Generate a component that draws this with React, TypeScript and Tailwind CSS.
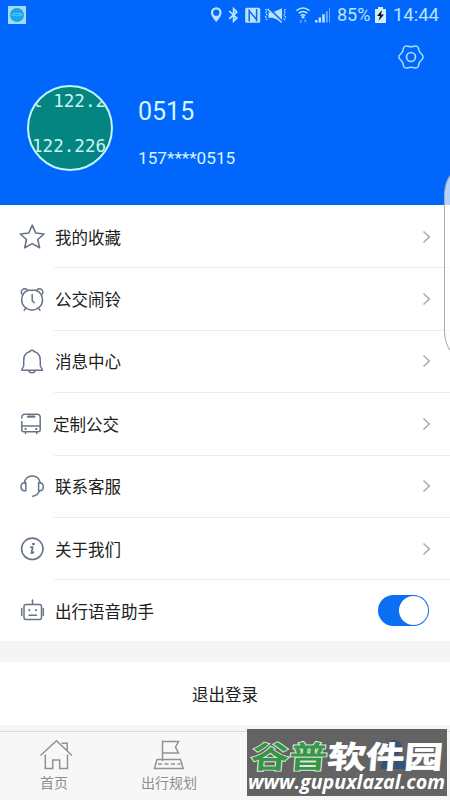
import type { ReactNode } from "react";

type MenuItem = {
  label: string;
  icon: ReactNode;
  shifted?: boolean;
};

function Icon({ children }: { children: ReactNode }) {
  return (
    <svg
      viewBox="0 0 26 26"
      className="h-[26px] w-[26px] shrink-0"
      fill="none"
      stroke="#66748a"
      strokeWidth="1.5"
      strokeLinecap="round"
      strokeLinejoin="round"
    >
      {children}
    </svg>
  );
}

const menuItems: MenuItem[] = [
  {
    label: "我的收藏",
    icon: (
      <Icon>
        <path d="M13.2 1.2 16.7 9 25 10 18.8 15.5 20.6 23.8 13.2 19.6 5.7 23.8 7.5 15.5 1.3 10 9.8 9Z" strokeWidth="1.6" />
      </Icon>
    ),
  },
  {
    label: "公交闹铃",
    icon: (
      <Icon>
        <path d="M9.5 3.3H16.5C21 4.8 23.5 8.6 23.5 13A10.4 10 0 0 1 2.7 13C2.7 8.6 5 4.8 9.5 3.3Z" />
        <path d="M3.5 7.7A3.4 3.4 0 1 1 8.7 3.5M17.5 3.5A3.4 3.4 0 1 1 22.7 7.7M6.4 21.6 5.2 23.4M19.8 21.6 21 23.4" />
        <path d="M13.2 7.5V13.5L15.2 15.8" strokeWidth="1.5" />
      </Icon>
    ),
  },
  {
    label: "消息中心",
    icon: (
      <Icon>
        <path d="M11 2.6C11 .8 15 .8 15 2.6C19.5 3.6 21.3 7.2 21.3 11.5V16.5C21.3 18.5 23.4 19.3 23.4 21.3H2.8C2.8 19.3 4.7 18.5 4.7 16.5V11.5C4.7 7.2 6.5 3.6 11 2.6Z" />
        <path d="M9.8 21.5C10 24.6 16 24.6 16.2 21.5" />
      </Icon>
    ),
  },
  {
    label: "定制公交",
    shifted: true,
    icon: (
      <Icon>
        <path d="M2.8 7V6.2A3 3 0 0 1 5.8 3.2H18.2A3 3 0 0 1 21.2 6.2V18.7A2 2 0 0 1 19.2 20.7H4.8A2 2 0 0 1 2.8 18.7V10.5M3 15H21M6.5 20.8V22.4M17.7 20.8V22.4" />
        <path d="M9 5.7H15.3" strokeWidth="2.2" />
        <path d="M6.3 18H6.8M17 18H17.5" strokeWidth="1.8" />
      </Icon>
    ),
  },
  {
    label: "联系客服",
    icon: (
      <Icon>
        <path d="M5.5 9C6 4.4 9 2 13.3 2S20.4 4.4 21 9" />
        <path d="M6.8 8.8V16.8H5.4C1 16.8 1 8.8 5.4 8.8ZM19.6 8.8V16.8H21C25.3 16.8 25.3 8.8 21 8.8Z" />
        <path d="M20.4 17C19.4 20 17 21.8 13.6 22.2" />
      </Icon>
    ),
  },
  {
    label: "关于我们",
    icon: (
      <Icon>
        <circle cx="13.3" cy="12.8" r="10.7" strokeWidth="1.6" />
        <path d="M11.8 11.2H13.7L12.4 17.2C13 17.4 13.8 17.1 14.6 16.2" strokeWidth="1.7" />
        <circle cx="14.4" cy="8" r="1" fill="#66748a" strokeWidth=".8" />
      </Icon>
    ),
  },
];

function StatusBar() {
  return (
    <div className="flex h-[30px] items-center justify-between pl-2 pr-[11px] text-[#b9e4ff]">
      <svg viewBox="0 0 18 18" className="h-[18px] w-[18px]">
        <rect width="18" height="18" fill="#a5d9fa" />
        <circle cx="9" cy="9" r="7" fill="#16a6ed" />
        <path d="M3 8.5Q9 11.5 15 8.5M5 7.5H13" fill="none" stroke="#62c9f7" strokeWidth="1" />
      </svg>
      <div className="flex items-center">
        <svg viewBox="0 0 126 20" className="mr-[3px] h-5 w-[126px]" fill="currentColor">
          <path fillRule="evenodd" d="M8.3 2.2A5.4 5.4 0 0 0 2.9 7.6C2.9 11.7 8.3 17 8.3 17S13.6 11.7 13.6 7.6A5.4 5.4 0 0 0 8.3 2.2ZM8.3 4.6A3.1 3.1 0 1 1 8.3 10.8A3.1 3.1 0 0 1 8.3 4.6Z" />
          <path d="M21.2 6 28.8 13.1 25.6 16.3V3.7L28.8 6.9 21.2 13.8" fill="none" stroke="currentColor" strokeWidth="1.7" />
          <rect x="37.2" y="2.7" width="15" height="15" rx="1.5" />
          <path d="M41.2 16.5V5.8L48.6 14.6V4M41.2 8.5V4.6M48.6 14V16.5" fill="none" stroke="#0868f7" strokeWidth="1.5" />
          <path d="M60.5 7.4H64.5L74 3.3V16.5L64.5 12.7H60.5Z" />
          <path d="M60.3 3.2 74.4 16.9" stroke="#0868f7" strokeWidth="2.4" />
          <path d="M59.5 4 73.6 17.5" stroke="currentColor" strokeWidth="1.5" />
          <path d="M57.5 4 59 6 57.5 8 59 10 57.5 12 59 14 57.5 16M77.5 4 76 6 77.5 8 76 10 77.5 12 76 14 77.5 16" fill="none" stroke="currentColor" strokeWidth="1.1" strokeDasharray="2 1" />
          <g fill="none" stroke="currentColor" strokeWidth="1.5">
            <path d="M88.5 5.6Q95 .3 101.5 5.6M90.7 8.2Q95 4.7 99.3 8.2M92.7 10.6Q95 8.8 97.3 10.6" />
          </g>
          <path d="M95 10.6 97 12.2 95 13.8 93 12.2Z" />
          <path d="M92.7 15V18M97.3 14.5V17.5" stroke="#66adff" strokeWidth="1.5" />
          <path d="M107 15H109.5V17.5H107ZM110.6 12.5H113V17.5H110.6ZM114.2 9.2H116.7V17.5H114.2Z" />
          <path d="M117.8 6.2H119.8V17.5H117.8ZM121 3H122V17.5H121Z" opacity=".55" />
        </svg>
        <span className="w-[35px] text-[18px] leading-5">85%</span>
        <svg viewBox="0 0 11 16" className="ml-[3px] mr-[7px] h-4 w-[11px]">
          <path d="M3 0H8V2H11V16H0V2H3Z" fill="#d3effa" />
          <path d="M7 3 2 9H5L3.5 14 9 7.5H6Z" fill="#07172d" />
        </svg>
        <span className="text-[18.5px] leading-5">14:44</span>
      </div>
    </div>
  );
}

function Header() {
  return (
    <header className="h-[205px] bg-[#0167fc] font-[Roboto,sans-serif] text-[#d8f4ff]">
      <StatusBar />
      <div className="flex h-[54px] justify-end pr-[26px] pt-[14px]">
        <svg viewBox="0 0 26 26" className="h-[26px] w-[26px]" fill="none" stroke="#a9dcff" strokeWidth="1.5" strokeLinejoin="round">
          <path d="M6.8 2.3C8.9 1.2 10.1 2.8 13 2.8S17.1 1.2 19.2 2.3C21 3.3 20.2 5.4 21.6 7.8S25.1 10.6 25.1 13S23 15.8 21.6 18.2S21 22.7 19.2 23.7C17.1 24.8 15.9 23.2 13 23.2S8.9 24.8 6.8 23.7C5 22.7 5.8 20.6 4.4 18.2S.9 15.4 .9 13S3 10.2 4.4 7.8S5 3.3 6.8 2.3Z" />
          <circle cx="13" cy="13" r="4.5" strokeWidth="1.7" />
        </svg>
      </div>
      <div className="flex">
        <div className="ml-[27px] mt-[1px] h-[86px] w-[86px] shrink-0 overflow-hidden rounded-full border-2 border-[#c3f5ff] bg-[#058581] font-['DejaVu_Sans_Mono',monospace] text-[17.6px] leading-5 text-[#ccf5ef]">
          <p className="ml-[3px] mt-[4px] whitespace-pre">{"t 122.2"}</p>
          <p className="ml-[3px] mt-[25px] whitespace-pre">122.226</p>
        </div>
        <div className="ml-[25px] pt-[12px]">
          <p className="text-[25px] leading-8">0515</p>
          <p className="mt-[20px] text-[17.2px] leading-5">157****0515</p>
        </div>
      </div>
    </header>
  );
}

function MenuRow({ label, icon, shifted }: MenuItem) {
  return (
    <li className="flex h-[62.4px] pl-[19px]">
      <div className="flex w-[35px] items-center">{icon}</div>
      <div className="flex flex-1 items-center justify-between border-b border-[#ececee] pr-[19px]">
        <span className={shifted ? "-ml-px" : "ml-px"}>{label}</span>
        <svg viewBox="0 0 9 14" className="h-[14px] w-[9px]" fill="none" stroke="#acacae" strokeWidth="1.6">
          <path d="M1.5 1.5 7.3 7 1.5 12.5" />
        </svg>
      </div>
    </li>
  );
}

function TabBar() {
  return (
    <nav className="flex h-[69px] border-t border-[#dcdcde] bg-[#f7f7f8] pl-[1px] text-[14px] leading-5 text-[#8e8e8e]">
      <div className="flex w-[106px] flex-col items-center pt-[6px]">
        <svg viewBox="0 0 34 34" className="ml-[4px] h-[34px] w-[34px]" fill="none" stroke="#929292" strokeWidth="1.5">
          <path d="M1.5 17.5 17.5 2.8 33 17.5M6.3 16.5V30.5H13.7V22H20.7V30.5H28.5V16.5M22.5 5.2H28.2V12.5" />
        </svg>
        <span>首页</span>
      </div>
      <div className="flex w-[124px] flex-col items-center pt-[6px]">
        <svg viewBox="0 0 34 34" className="h-[34px] w-[34px]" fill="none" stroke="#929292" strokeWidth="1.5">
          <path d="M10.5 23V2.5M10.5 3.5H26.5L23.5 9.2 26.5 15H10.5M5 21.5H28.5L31.2 30.5H2.5Z" />
          <path d="M6 26H28.5" strokeDasharray="4 2.5" />
        </svg>
        <span>出行规划</span>
      </div>
    </nav>
  );
}

function Watermark() {
  return (
    <div className="absolute left-[247px] top-[729px] h-[67px] w-[200px] bg-[#636363]">
      <svg viewBox="0 0 200 67" className="h-[67px] w-[200px]">
        <g fill="#365176">
          <circle cx="147" cy="19" r="8" />
          <path d="M134 40C134 31 139 29 142 27H152C157 30 160 33 160 40Z" />
        </g>
        <g
          fontFamily="'Noto Sans CJK SC', sans-serif"
          fontWeight="700"
          fontSize="34"
          transform="translate(4 39) skewX(-5) scale(1.13 .9)"
          paintOrder="stroke"
        >
          <text x="-1" y="0" fill="#369546" stroke="#ddebdc" strokeWidth="2">谷普</text>
          <text x="67" y="0" fill="#fff" stroke="#fff" strokeWidth=".8">软件园</text>
        </g>
        <text
          x="1"
          y="60"
          fill="#fff"
          fontFamily="'Open Sans', sans-serif"
          fontWeight="700"
          fontStyle="italic"
          fontSize="20"
          textLength="197"
          lengthAdjust="spacingAndGlyphs"
        >
          www.gupuxlazal.com
        </text>
      </svg>
    </div>
  );
}

export default function App() {
  return (
    <div className="relative h-[800px] w-[450px] overflow-hidden bg-[#f5f5f6] font-['Noto_Sans_CJK_SC',sans-serif] text-[16.5px] leading-6 text-[#202020]">
      <Header />
      <main>
        <ul className="bg-white pt-px">
          {menuItems.map((item) => (
            <MenuRow key={item.label} {...item} />
          ))}
        </ul>
        <div className="flex h-[60.6px] items-center bg-white pl-[19px] pr-[21px]">
          <Icon>
            <rect x="5" y="6.5" width="17.5" height="15" rx="2" />
            <path d="M13.5 6V2M2.7 10.5V17.5M24.3 10.5V17.5M10 17.2H17.5" />
            <path d="M10.3 12V12.3M17 12V12.3" strokeWidth="2" />
          </Icon>
          <span className="ml-[10px] flex-1 pt-px">出行语音助手</span>
          <div
            role="switch"
            aria-checked="true"
            className="flex h-[31px] w-[51px] items-center justify-end rounded-full bg-[#0b6ff4] pr-px"
          >
            <span className="h-[29px] w-[29px] rounded-full bg-white" />
          </div>
        </div>
        <div className="mt-[21px] flex h-[63px] items-center justify-center bg-white pt-px">退出登录</div>
      </main>
      <div className="h-[6px]" />
      <TabBar />

      {/* edge panel handle */}
      <div className="absolute left-[444px] top-[172px] h-[182px] w-5 rounded-[12px_0_0_12px/24px_0_0_24px] border border-[#aaa] bg-white/70" />
      <Watermark />
    </div>
  );
}
